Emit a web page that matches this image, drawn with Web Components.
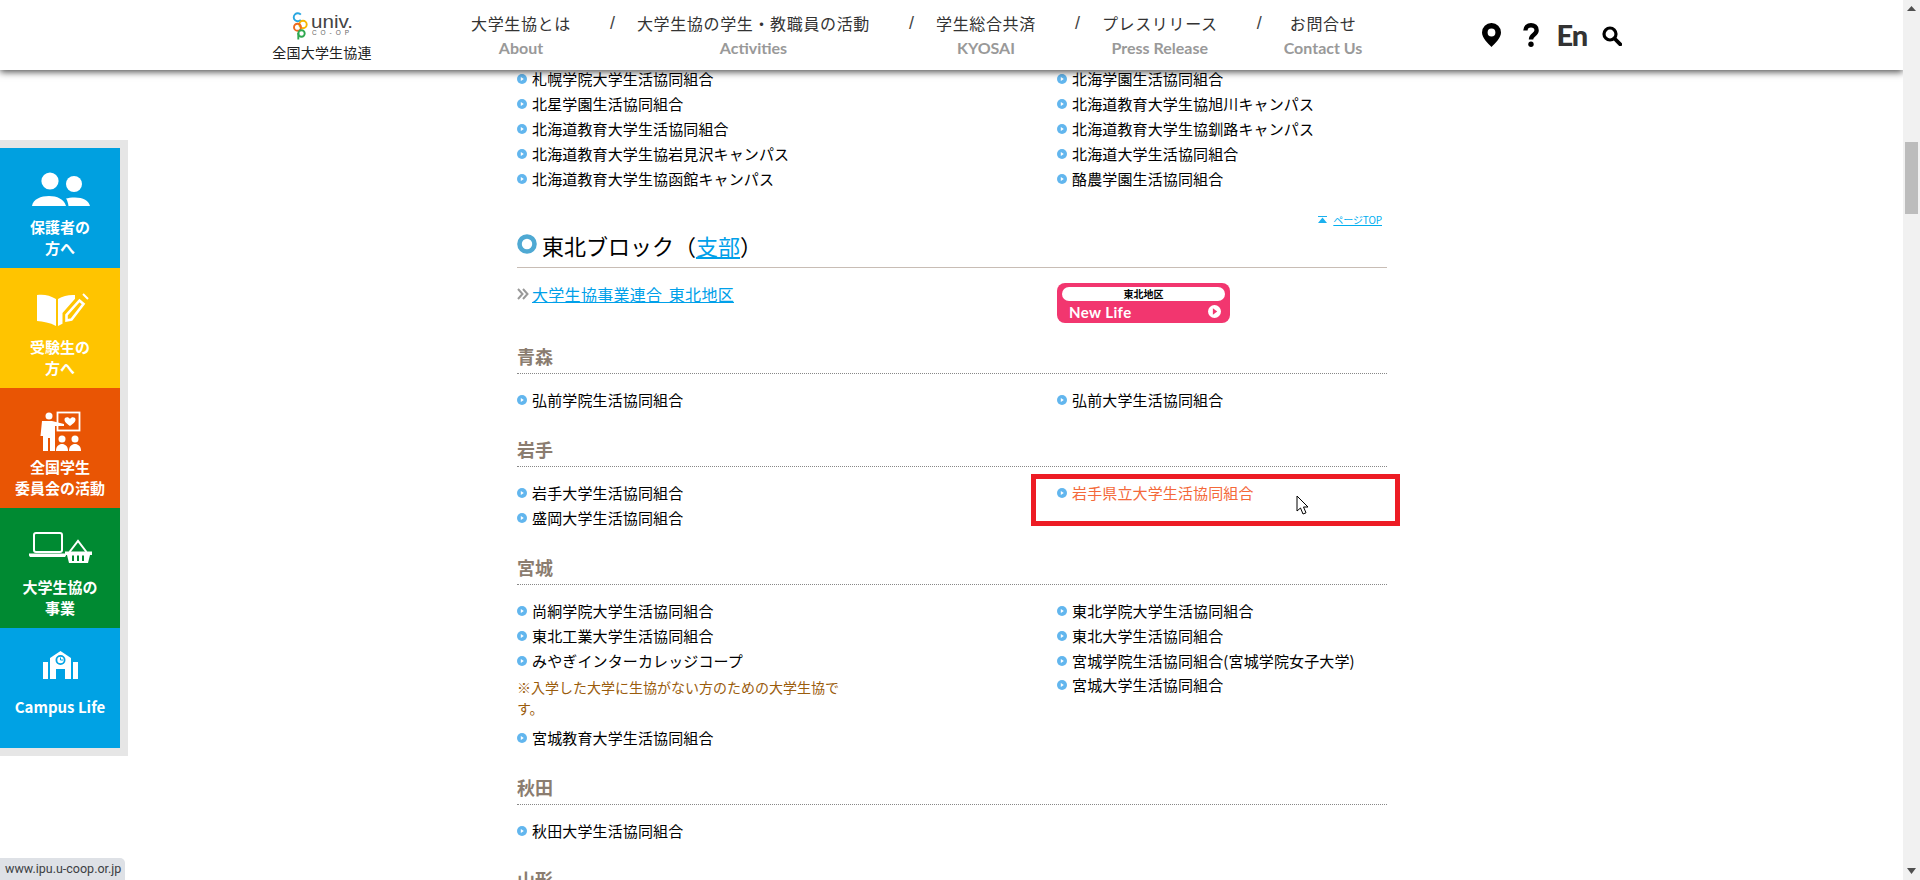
<!DOCTYPE html>
<html lang="ja"><head><meta charset="utf-8"><title>大学生協</title>
<style>
html,body{margin:0;padding:0;height:880px;overflow:hidden;background:#fff;font-family:"Noto Sans CJK JP","Liberation Sans",sans-serif}
</style></head>
<body>
<app-page>
  <app-header></app-header>
  <side-nav>
    <nav-tile color="#00a0e0" icon="people">保護者の<br>方へ</nav-tile>
    <nav-tile color="#ffc400" icon="book">受験生の<br>方へ</nav-tile>
    <nav-tile color="#e95504" icon="teacher">全国学生<br>委員会の活動</nav-tile>
    <nav-tile color="#008a32" icon="shop">大学生協の<br>事業</nav-tile>
    <nav-tile color="#00a2e4" icon="school">Campus Life</nav-tile>
  </side-nav>
  <main-column>
    <link-grid>
      <div><coop-link>札幌学院大学生活協同組合</coop-link><coop-link>北星学園生活協同組合</coop-link><coop-link>北海道教育大学生活協同組合</coop-link><coop-link>北海道教育大学生協岩見沢キャンパス</coop-link><coop-link>北海道教育大学生協函館キャンパス</coop-link></div>
      <div><coop-link>北海学園生活協同組合</coop-link><coop-link>北海道教育大学生協旭川キャンパス</coop-link><coop-link>北海道教育大学生協釧路キャンパス</coop-link><coop-link>北海道大学生活協同組合</coop-link><coop-link>酪農学園生活協同組合</coop-link></div>
    </link-grid>
    <page-top></page-top>
    <block-heading>東北ブロック（<a href="#">支部</a>）</block-heading>
    <union-row></union-row>
    <region-heading style="margin-top:18px">青森</region-heading>
    <link-grid>
      <div><coop-link>弘前学院生活協同組合</coop-link></div>
      <div><coop-link>弘前大学生活協同組合</coop-link></div>
    </link-grid>
    <region-heading style="margin-top:21.2px">岩手</region-heading>
    <link-grid>
      <div><coop-link>岩手大学生活協同組合</coop-link><coop-link>盛岡大学生活協同組合</coop-link></div>
      <div><coop-link hover>岩手県立大学生活協同組合</coop-link></div>
    </link-grid>
    <region-heading style="margin-top:21.8px">宮城</region-heading>
    <link-grid>
      <div><coop-link>尚絅学院大学生活協同組合</coop-link><coop-link>東北工業大学生活協同組合</coop-link><coop-link>みやぎインターカレッジコープ</coop-link><coop-note>※入学した大学に生協がない方のための大学生協です。</coop-note><coop-link>宮城教育大学生活協同組合</coop-link></div>
      <div><coop-link>東北学院大学生活協同組合</coop-link><coop-link>東北大学生活協同組合</coop-link><coop-link>宮城学院生活協同組合(宮城学院女子大学)</coop-link><coop-link>宮城大学生活協同組合</coop-link></div>
    </link-grid>
    <region-heading style="margin-top:21.6px">秋田</region-heading>
    <link-grid>
      <div><coop-link>秋田大学生活協同組合</coop-link></div>
      <div></div>
    </link-grid>
    <region-heading style="margin-top:21px">山形</region-heading>
  </main-column>
  <fake-scrollbar></fake-scrollbar>
  <focus-mark></focus-mark>
  <status-bubble>www.ipu.u-coop.or.jp</status-bubble>
</app-page>
<script>
const JP='"Noto Sans CJK JP","Liberation Sans",sans-serif';
function def(name,html,cls){
  customElements.define(name,class extends (cls||HTMLElement){
    constructor(){super();this.attachShadow({mode:'open'}).innerHTML=typeof html==='function'?html(this):html;}
  });
}
def('app-page',`<style>:host{display:flex;width:1920px;height:880px;overflow:hidden;position:relative;background:#fff}</style><slot></slot>`);

const navItems=[['大学生協とは','About'],['大学生協の学生・教職員の活動','Activities'],['学生総合共済','KYOSAI'],['プレスリリース','Press Release'],['お問合せ','Contact Us']];
def('app-header',`<style>
:host{display:flex;position:absolute;left:0;top:0;width:1903px;height:70px;background:#fff;box-shadow:0 2px 7px rgba(0,0,0,.7);z-index:5;padding-left:272px;box-sizing:border-box;align-items:flex-start;font-family:${JP}}
.logo{width:100px;display:flex;flex-direction:column;align-items:center}
.logo svg{display:block;width:100px;height:43px}
.logo span{font-size:14px;line-height:18px;color:#222;white-space:nowrap;margin-top:0;letter-spacing:.2px}
nav{display:flex;margin-left:99px;align-items:flex-start}
.it{display:flex;flex-direction:column;align-items:center;white-space:nowrap}
.jp{font-size:16px;letter-spacing:.65px;line-height:24px;margin-top:11px;color:#333}
.en{font-family:"Lato","Liberation Sans",sans-serif;font-size:16px;font-weight:700;color:#999;line-height:24px;margin-top:1px;letter-spacing:0}
.sl{width:9px;margin:11px 20px 0 37px;font-size:18px;line-height:24px;color:#444;text-align:center;font-family:"Liberation Sans",sans-serif}
.ic{display:flex;margin-left:120px;align-items:flex-start;margin-top:23px}
.ic svg{display:block}
.en2{font-family:"Lato","Liberation Sans",sans-serif;font-weight:900;font-size:29px;line-height:24px;color:#333;margin:0 15px 0 17px;letter-spacing:-1px}
</style>
<div class="logo"><svg viewBox="0 0 100 43">
<g fill="none" stroke-width="1.900">
<path d="M28.800 14.700A4 4 0 1 0 28.800 19.800" stroke="#29a7e1"/>
<circle cx="31" cy="24.500" r="3.700" stroke="#f7b500"/>
<circle cx="25.500" cy="27.200" r="3.500" stroke="#ee6a1f"/>
<circle cx="29.500" cy="33.500" r="3.200" stroke="#2fa84f"/><path d="M26.300 33v6.500" stroke="#2fa84f"/></g>
<text x="39" y="28" font-family="Liberation Sans,sans-serif" font-size="19" fill="#444" textLength="42" lengthAdjust="spacingAndGlyphs">univ.</text>
<text x="40" y="34.500" font-family="Liberation Sans,sans-serif" font-size="6.500" fill="#666" textLength="37">CO-OP</text>
</svg><span>全国大学生協連</span></div>
<nav>${navItems.map((n,i)=>`${i?'<div class="sl">/</div>':''}<div class="it"><div class="jp">${n[0]}</div><div class="en">${n[1]}</div></div>`).join('')}</nav>
<div class="ic">
<svg width="19" height="24" viewBox="0 0 19 24"><path fill="#000" fill-rule="evenodd" d="M9.500 0A9.400 9.400 0 0 0 0 9.400C0 15 6 20 9.500 24 13 20 19 15 19 9.400A9.400 9.400 0 0 0 9.500 0Zm0 5.600a3.900 3.900 0 1 1 0 7.800 3.900 3.900 0 0 1 0-7.800Z"/></svg>
<svg width="16" height="24" viewBox="0 0 16 24" style="margin-left:22px"><path fill="none" stroke="#000" stroke-width="4.400" d="M2.400 7.600C2.400 4 4.800 2.200 8 2.200s5.600 1.900 5.600 5c0 4.700-5.600 4.300-5.600 9.200"/><circle cx="8" cy="21.300" r="2.700" fill="#000"/></svg>
<div class="en2">En</div>
<svg width="20" height="20" viewBox="0 0 20 20" style="margin-top:3px"><circle cx="8" cy="8" r="6" fill="none" stroke="#000" stroke-width="3.200"/><path d="M12.500 12.500L18.300 18.300" stroke="#000" stroke-width="3.800" stroke-linecap="round"/></svg>
</div>`);

def('side-nav',`<style>:host{display:flex;flex-direction:column;position:absolute;left:0;top:140px;width:120px;border:8px solid #e6e6e6;border-left:0;z-index:4}</style><slot></slot>`);
const icons={
people:`<circle cx="50" cy="33" r="8.600"/><circle cx="74" cy="36" r="8"/><path d="M32 58C33 51 41 48 49 48S64 51 66 58Z"/><path d="M66 50.500C68 49.800 71 49.400 75 49.400 83 49.400 89 52.500 90 58H68.500C68 55 67.500 52.500 66 50.500Z"/>`,
book:`<path d="M37 27C43 26 50 27 56 31V58C50 54.500 43 53.500 37 53Z"/><path d="M58 31C63 28 69 26.500 75 27V53C69 53 63 55 58 58Z"/><path d="M65 54V46L79 30 86 36 73 52Z" fill="#ffc400" stroke="#ffc400" stroke-width="5"/><path d="M66.500 52.500V47L79.500 32.500 83.500 36 71.500 51.500Z" fill="#ffc400" stroke="#fff" stroke-width="2.600"/><path d="M83 26L88 31" stroke="#fff" stroke-width="2" fill="none"/>`,
teacher:`<rect x="57.500" y="24.500" width="22" height="18" fill="none" stroke="#fff" stroke-width="1.800"/><path d="M70 38C66 35 64.500 33.500 64.500 31.500 64.500 29 68.500 28.500 70 31 71.500 28.500 75.500 29 75.500 31.500 75.500 33.500 74 35 70 38Z"/><circle cx="49" cy="28" r="3.500"/><path d="M42 33H52L64 36V38L55 38V63H50V50H48V63H43V48H40.500Z"/><circle cx="62" cy="51" r="3.500"/><circle cx="75" cy="51" r="3.500"/><path d="M56 63C56 58 59 56 62 56S68 58 68 63Z"/><path d="M69 63C69 58 72 56 75 56S81 58 81 63Z"/>`,
shop:`<rect x="34" y="25" width="28" height="19" rx="2" fill="none" stroke="#fff" stroke-width="2"/><path d="M29 45.500H66V47C66 48.500 65 49 64 49H31C30 49 29 48.500 29 47Z"/><path d="M69.500 44L78 33 86.500 44" fill="none" stroke="#fff" stroke-width="2"/><path d="M65 43.500H92V47H90L88 55H69L67 47H65ZM72 47.500V53H74V47.500ZM77 47.500V53H79V47.500ZM82 47.500V53H84V47.500Z" fill-rule="evenodd"/>`,
school:`<path fill-rule="evenodd" d="M60.500 23L71 30V51H65V41H56V51H50V30ZM60.500 27A5 5 0 1 0 60.500 37 5 5 0 0 0 60.500 27Z"/><circle cx="60.500" cy="32" r="3.200"/><path d="M60.500 29.500V32H63" stroke="#00a2e4" fill="none" stroke-width="1"/><rect x="43" y="34" width="5" height="17"/><rect x="73" y="34" width="5" height="17"/>`
};
def('nav-tile',t=>`<style>:host{display:block;width:120px;height:120px;background:${t.getAttribute('color')};color:#fff;font-family:${JP};font-weight:700;font-size:15px;line-height:21px;text-align:center}
svg{display:block;width:120px;height:68px}div{white-space:nowrap}</style>
<svg viewBox="0 0 120 68" fill="#fff">${icons[t.getAttribute('icon')]}</svg><div><slot></slot></div>`);

def('main-column',`<style>:host{display:block;flex:none;box-sizing:border-box;width:870px;margin-left:517px;padding-top:66.600px;height:880px;overflow:hidden;font-family:${JP};color:#000}</style><slot></slot>`);
def('link-grid',`<style>:host{display:grid;grid-template-columns:540px 330px}::slotted(div){min-width:0}</style><slot></slot>`);
def('coop-link',t=>`<style>:host{display:flex;align-items:center;height:24.800px;font-size:15px;letter-spacing:.13px;color:${t.hasAttribute('hover')?'#f4693a':'#000'};white-space:nowrap}
svg{flex:none;margin-right:5px;margin-top:1px}</style>
<svg width="10" height="10" viewBox="0 0 10 10"><circle cx="5" cy="5" r="5" fill="#62b6ee"/><path d="M3.800 3L6.800 5 3.800 7Z" fill="#fff"/></svg><slot></slot>`);
def('coop-note',`<style>:host{display:block;width:330px;font-size:14px;line-height:21.500px;color:#9a5c0c;margin:4px 0 6px}</style><slot></slot>`);
def('page-top',`<style>:host{display:flex;justify-content:flex-end;align-items:center;height:20px;margin-top:19px;padding-right:5px;font-size:10px;color:#00aeef}
svg{margin-right:6px}span{text-decoration:underline;letter-spacing:-.1px}</style>
<svg width="9" height="7" viewBox="0 0 9 7"><path d="M0 0H9V1H0ZM4.500 1.500L9 7H0Z" fill="#1bb0ee"/></svg><span>ページTOP</span>`);
def('block-heading',`<style>:host{display:flex;align-items:center;height:31.400px;padding-bottom:6px;border-bottom:1px solid #c8bdb5;font-size:22px;color:#000;white-space:nowrap;box-sizing:content-box}
svg{margin-right:5px;margin-top:-3px;flex:none}::slotted(a){color:#00a0e9;text-decoration:underline}</style>
<svg width="20" height="20" viewBox="0 0 20 20"><circle cx="10" cy="10" r="7.500" fill="#fff" stroke="#4fa9d3" stroke-width="4.600"/></svg><slot></slot>`);
def('union-row',`<style>:host{display:grid;grid-template-columns:540px 330px;margin-top:15px;height:40px;font-family:${JP}}
.l{display:flex;align-items:flex-start;font-size:16px;line-height:22px;letter-spacing:.3px;word-spacing:2.500px;color:#00a0e9;white-space:nowrap}.l u{display:block}
.a{color:#999;margin-right:3px;flex:none;margin-top:5px}
.b{width:173px;height:40px;background:#f2366f;border-radius:8px;box-sizing:border-box;padding:4px 5px 0;color:#fff}
.p{height:14px;border-radius:7px;background:#fff;color:#000;font-size:10px;font-weight:700;line-height:14px;text-align:center}
.n{display:flex;justify-content:space-between;align-items:center;padding:1px 4px 0 7px;font-family:"Lato","Liberation Sans",sans-serif;font-weight:700;font-size:15px;line-height:20px;letter-spacing:.4px}</style>
<div class="l"><svg class="a" width="12" height="12" viewBox="0 0 12 12"><path d="M1 1L5.500 6 1 11M6 1L10.500 6 6 11" fill="none" stroke="#999" stroke-width="2"/></svg><u>大学生協事業連合 東北地区</u></div>
<div class="b"><div class="p">東北地区</div><div class="n"><span>New Life</span><svg width="13" height="13" viewBox="0 0 12 12"><circle cx="6" cy="6" r="6" fill="#fff"/><path d="M4.500 3L8.500 6 4.500 9Z" fill="#f2366f"/></svg></div></div>`);
def('region-heading',`<style>:host{display:block;height:31px;padding-bottom:1px;line-height:31px;border-bottom:1px dotted #888;font-size:18px;font-weight:700;color:#8b7d70;margin-bottom:13.600px}</style><slot></slot>`);
def('fake-scrollbar',`<style>:host{display:block;position:absolute;right:0;top:0;width:17px;height:880px;background:#f1f1f1;z-index:6}
.t{position:absolute;left:2px;top:142px;width:13px;height:72px;background:#bcbcbc}
svg{position:absolute;left:4px}</style>
<svg style="top:6px" width="9" height="6" viewBox="0 0 9 6"><path d="M4.500 0L9 5H0Z" fill="#505050"/></svg><div class="t"></div>
<svg style="bottom:6px" width="9" height="6" viewBox="0 0 9 6"><path d="M4.500 6L9 0H0Z" fill="#505050"/></svg>`);
def('focus-mark',`<style>:host{display:block;position:absolute;left:1031px;top:474px;width:369px;height:52px;box-sizing:border-box;border:5px solid #ed1c24;z-index:3}
svg{position:absolute;left:260px;top:16px}</style>
<svg width="14" height="20" viewBox="0 0 14 20"><path d="M1 1V16L4.500 13 7 19 10 17.800 7.500 12H12Z" fill="#fff" stroke="#000" stroke-width="1"/></svg>`);
def('status-bubble',`<style>:host{display:block;position:absolute;left:0;bottom:0;height:22px;width:125px;box-sizing:border-box;background:#dee1e6;border-top-right-radius:5px;padding-left:5px;font:12.500px/22px "Roboto","Liberation Sans",sans-serif;color:#3c4043;white-space:nowrap;z-index:7}</style><slot></slot>`);
</script>
</body></html>
